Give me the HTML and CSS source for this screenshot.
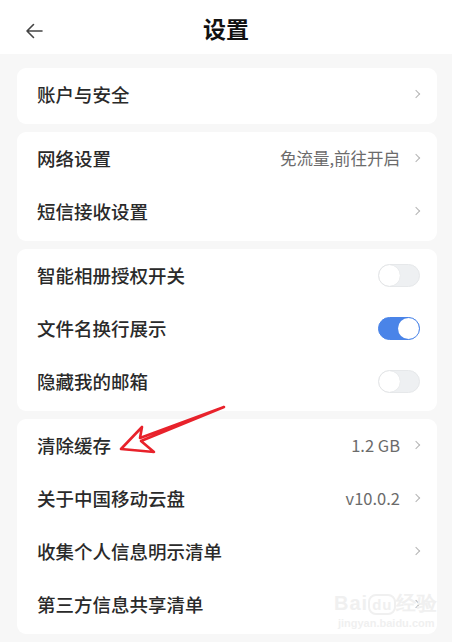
FILE: index.html
```html
<!DOCTYPE html>
<html lang="zh">
<head>
<meta charset="utf-8">
<link rel="stylesheet" href="styles.css">
</head>
<body>
<div class="screen">
  <header class="topbar">
    <svg class="back" width="18" height="16" viewBox="0 0 18 16"><path d="M17 8H2M8.5 1.5L2 8l6.5 6.5" fill="none" stroke="#444" stroke-width="1.6" stroke-linecap="round" stroke-linejoin="round"/></svg>
    <h1 class="title">设置</h1>
  </header>
  <main class="list">
    <section class="card">
      <div class="row"><span class="label">账户与安全</span><span class="chev"></span></div>
    </section>
    <section class="card">
      <div class="row"><span class="label">网络设置</span><span class="value">免流量,前往开启</span><span class="chev"></span></div>
      <div class="row"><span class="label">短信接收设置</span><span class="chev"></span></div>
    </section>
    <section class="card">
      <div class="row"><span class="label">智能相册授权开关</span><span class="toggle"></span></div>
      <div class="row"><span class="label">文件名换行展示</span><span class="toggle on"></span></div>
      <div class="row"><span class="label">隐藏我的邮箱</span><span class="toggle"></span></div>
    </section>
    <section class="card">
      <div class="row"><span class="label">清除缓存</span><span class="value">1.2 GB</span><span class="chev"></span></div>
      <div class="row"><span class="label">关于中国移动云盘</span><span class="value">v10.0.2</span><span class="chev"></span></div>
      <div class="row"><span class="label">收集个人信息明示清单</span><span class="chev"></span></div>
      <div class="row"><span class="label">第三方信息共享清单</span><span class="chev"></span></div>
    </section>
  </main>
  <svg class="annot" width="452" height="642" viewBox="0 0 452 642"><path d="M121 449 L142 427 L140 438 L224 407 L141 441 L154 452 Z" fill="none" stroke="#e8222b" stroke-width="2.6" stroke-linejoin="round"/></svg>
  <div class="watermark"><div class="wm-top">Bai<span class="wm-du">du</span>经验</div><div class="wm-url">jingyan.baidu.com</div></div>
</div>
</body>
</html>
```

FILE: styles.css
```css
* { box-sizing: border-box; }
html, body { margin: 0; padding: 0; }
body {
  background: #f7f7f7;
  font-family: "Noto Sans CJK SC", "Noto Sans", sans-serif;
  color: #262626;
}
.screen { position: relative; width: 452px; height: 642px; overflow: hidden; }
.topbar {
  height: 54px;
  background: #fff;
  display: flex;
  align-items: center;
  justify-content: center;
  position: relative;
}
.back { position: absolute; left: 25px; top: 23px; }
.title {
  margin: 0;
  font-size: 23px;
  font-weight: 700;
  color: #111;
  line-height: 1;
  margin-top: 2px;
}
.list {
  padding: 14px 15px 0 17px;
  display: flex;
  flex-direction: column;
  gap: 8px;
}
.card {
  background: #fff;
  border-radius: 9px;
  padding: 1px 0 2px;
}
.row {
  height: 53px;
  display: flex;
  align-items: center;
  padding: 0 16px 3px 20px;
}
.label { font-size: 18.5px; font-weight: 500; flex: 1; color: #2a2a2a; }
.value { font-size: 16.5px; color: #6b6b6b; margin-right: 13px; }
.chev {
  width: 6px; height: 6px;
  border-top: 1.3px solid #b5b5b5;
  border-right: 1.3px solid #b5b5b5;
  transform: rotate(45deg);
  margin-right: 2px;
}
.toggle {
  width: 42px; height: 23px;
  border-radius: 12px;
  background: #eef0f2;
  border: 1px solid #e6e8ea;
  position: relative;
  margin-right: 1px;
}
.toggle::after {
  content: "";
  position: absolute;
  left: 0; top: 0;
  width: 21px; height: 21px;
  border-radius: 50%;
  background: #fff;
  box-shadow: 0 0 1px rgba(0,0,0,0.12);
}
.toggle.on { background: #4a84e8; border-color: #4a84e8; }
.toggle.on::after { left: auto; right: 0; box-shadow: none; }
.annot { position: absolute; left: 0; top: 0; pointer-events: none; }
.watermark {
  position: absolute;
  left: 334px; top: 592px;
  color: #f0f0f0;
  font-family: "Liberation Sans", sans-serif;
  text-align: center;
}
.wm-top { font-size: 20px; font-weight: 700; line-height: 22px; letter-spacing: 1px; }
.wm-du { border: 2px solid #f0f0f0; border-radius: 8px; padding: 0 2px; font-size: 15px; }
.wm-url { font-size: 11px; font-weight: 700; line-height: 14px; }
```
